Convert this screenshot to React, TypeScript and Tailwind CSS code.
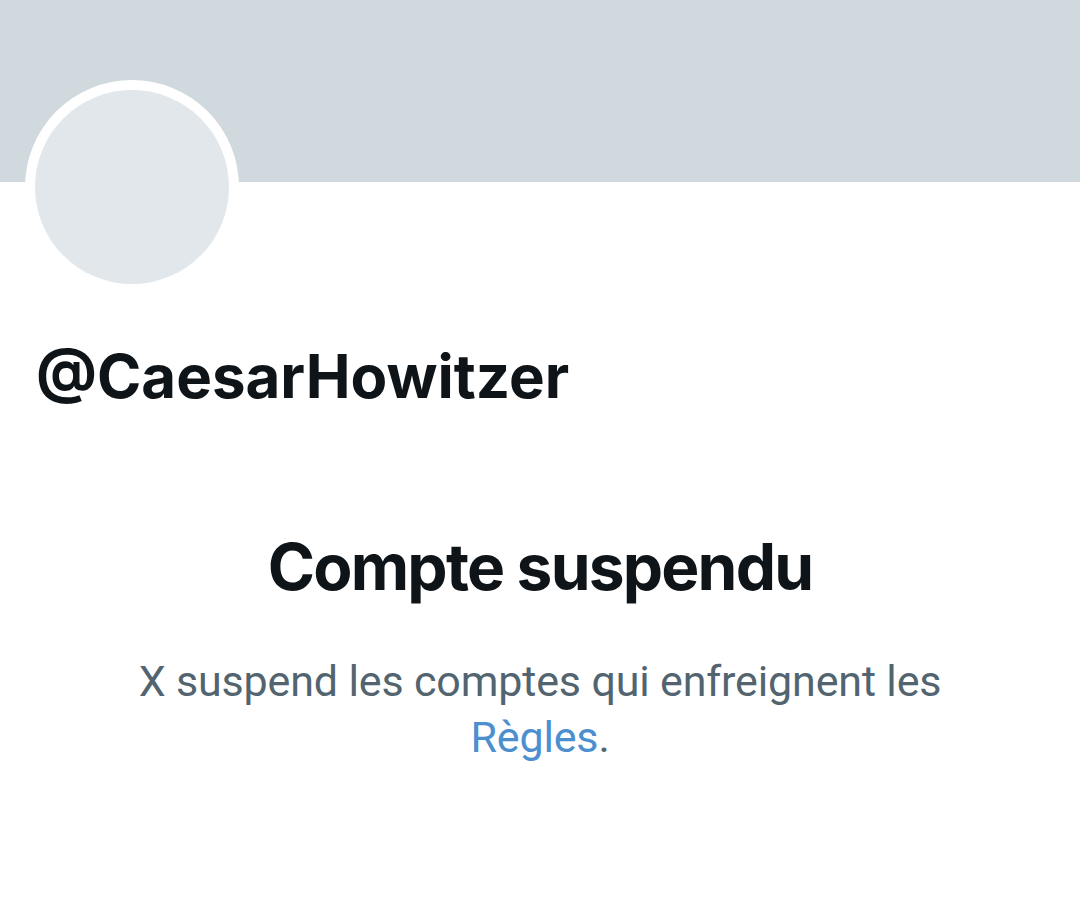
export default function App() {
  return (
    <div className="w-[1080px] h-[903px] bg-white overflow-hidden" style={{ fontFamily: "Roboto, 'Liberation Sans', sans-serif" }}>
      <div className="h-[182px] bg-[#cfd9de]" />
      <div className="ml-[25px] -mt-[102px] w-[214px] h-[214px] rounded-full bg-white p-[10px]">
        <div className="w-full h-full rounded-full bg-[#e1e7ea]" />
      </div>
      <div className="mt-[46px] pl-[36px] text-[60px] leading-[72px] font-bold text-[#0f1419] font-['Inter',sans-serif]">@CaesarHowitzer</div>
      <div className="mt-[117px] text-center text-[64px] leading-[76px] tracking-[-1.8px] font-bold text-[#0f1419] font-['Inter',sans-serif]">Compte suspendu</div>
      <p className="mt-[48px] mx-auto w-[830px] text-center text-[43px] leading-[56px] tracking-[-0.15px] text-[#536471]">
        X suspend les comptes qui enfreignent les <span className="text-[#4b8fcf]">Règles</span>.
      </p>
    </div>
  );
}
